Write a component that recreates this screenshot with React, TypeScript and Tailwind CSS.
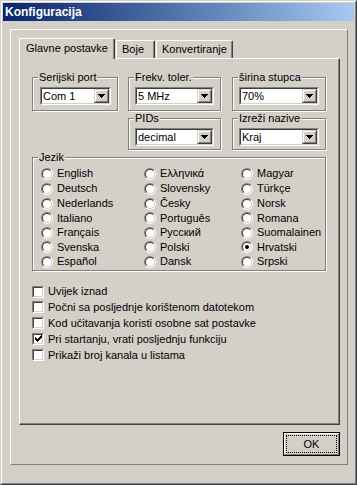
import React from 'react';

/* =======================
   DATA
======================= */
const LANGS: string[][] = [
  ['English', 'Ελληνικά', 'Magyar'],
  ['Deutsch', 'Slovensky', 'Türkçe'],
  ['Nederlands', 'Česky', 'Norsk'],
  ['Italiano', 'Português', 'Romana'],
  ['Français', 'Русский', 'Suomalainen'],
  ['Svenska', 'Polski', 'Hrvatski'],
  ['Español', 'Dansk', 'Srpski'],
];
const ROW_H = ['h-[15px]', 'h-[15px]', 'h-[15px]', 'h-[14px]', 'h-[15px]', 'h-[14px]', 'h-[15px]'];

const OPTIONS = [
  { label: 'Uvijek iznad', checked: false, h: 'h-[15px]' },
  { label: 'Počni sa posljednje korištenom datotekom', checked: false, h: 'h-[16px]' },
  { label: 'Kod učitavanja koristi osobne sat postavke', checked: false, h: 'h-[16px]' },
  { label: 'Pri startanju, vrati posljednju funkciju', checked: true, h: 'h-[16px]' },
  { label: 'Prikaži broj kanala u listama', checked: false, h: 'h-[16px]' },
];

/* =======================
   SMALL CONTROLS
======================= */
const Arrow = () => (
  <svg width="7" height="4" viewBox="0 0 7 4" shapeRendering="crispEdges">
    <path d="M0 0h7v1H0zM1 1h5v1H1zM2 2h3v1H2zM3 3h1v1H3z" fill="#000" />
  </svg>
);

const Combo: React.FC<{ value: string }> = ({ value }) => (
  <div className="h-[18px] border border-t-[#808080] border-l-[#808080] border-r-white border-b-white">
    <div className="flex h-full items-center bg-white border border-t-[#404040] border-l-[#404040] border-r-[#d4d0c8] border-b-[#d4d0c8]">
      <span className="flex-1 pl-[1px] leading-[14px]">{value}</span>
      <div className="h-full w-[15px] border border-t-[#d4d0c8] border-l-[#d4d0c8] border-r-[#404040] border-b-[#404040]">
        <div className="flex h-full items-center justify-center bg-[#d4d0c8] border border-t-white border-l-white border-r-[#808080] border-b-[#808080]">
          <Arrow />
        </div>
      </div>
    </div>
  </div>
);

const Group: React.FC<{ label: string; className?: string; children?: React.ReactNode }> = ({
  label,
  className,
  children,
}) => (
  <div
    className={`relative border border-[#808080] shadow-[1px_1px_0_#ffffff,inset_1px_1px_0_#ffffff] ${className ?? ''}`}
  >
    <span className="absolute left-[5px] top-[-7px] bg-[#d4d0c8] px-[1px] leading-[13px]">{label}</span>
    {children}
  </div>
);

const Radio: React.FC<{ checked?: boolean }> = ({ checked }) => (
  <div className="h-[12px] w-[12px] rounded-full border border-t-[#808080] border-l-[#808080] border-r-white border-b-white">
    <div className="flex h-full w-full items-center justify-center rounded-full bg-white border border-t-[#404040] border-l-[#404040] border-r-[#d4d0c8] border-b-[#d4d0c8]">
      {checked && <div className="h-[4px] w-[4px] rounded-full bg-black" />}
    </div>
  </div>
);

const Check: React.FC<{ checked?: boolean }> = ({ checked }) => (
  <div className="h-[12px] w-[12px] shrink-0 border border-t-[#808080] border-l-[#808080] border-r-white border-b-white">
    <div className="h-full w-full bg-white border border-t-[#404040] border-l-[#404040] border-r-[#d4d0c8] border-b-[#d4d0c8]">
      {checked && (
        <svg width="8" height="8" viewBox="0 0 8 8" shapeRendering="crispEdges">
          <path
            d="M1 2h1v3H1zM2 3h1v3H2zM3 4h1v3H3zM4 3h1v3H4zM5 2h1v3H5zM6 1h1v3H6zM7 0h1v3H7z"
            fill="#000"
          />
        </svg>
      )}
    </div>
  </div>
);

/* =======================
   MAIN DIALOG
======================= */
export default function App() {
  return (
    <div className="h-[485px] w-[357px] bg-[#d4d0c8] font-['Liberation_Sans',Arial,sans-serif] text-[11px] text-black border border-t-[#d4d0c8] border-l-[#d4d0c8] border-r-[#404040] border-b-[#404040]">
      <div className="h-full w-full p-[1px] border border-t-white border-l-white border-r-[#808080] border-b-[#808080]">
        {/* TITLE BAR */}
        <div className="flex h-[18px] items-center bg-gradient-to-r from-[#0a246a] to-[#a6caf0] pl-[2px]">
          <span className="text-[12px] font-bold text-white leading-[18px]">Konfiguracija</span>
        </div>

        {/* OUTER FRAME */}
        <div className="ml-[7px] mt-[8px] h-[436px] w-[338px] px-[8px] pt-[8px] border border-t-white border-l-white border-r-[#808080] border-b-[#808080]">
          {/* TABS */}
          <div className="flex h-[20px] items-end">
            <div className="relative z-10 -mb-[1px] flex h-[21px] w-[96px] items-start rounded-t-[2px] bg-[#d4d0c8] pl-[6px] pt-[3px] border-t border-l border-r border-t-white border-l-white border-r-[#404040] shadow-[inset_-1px_0_0_#808080]">
              <span className="leading-[13px]">Glavne postavke</span>
            </div>
            <div className="ml-[1px] flex h-[18px] w-[39px] items-start rounded-t-[2px] pl-[5px] pt-[2px] border-t border-l border-r border-t-white border-l-white border-r-[#404040] shadow-[inset_-1px_0_0_#808080]">
              <span className="leading-[13px]">Boje</span>
            </div>
            <div className="ml-[1px] flex h-[18px] w-[77px] items-start rounded-t-[2px] pl-[5px] pt-[2px] border-t border-l border-r border-t-white border-l-white border-r-[#404040] shadow-[inset_-1px_0_0_#808080]">
              <span className="leading-[13px]">Konvertiranje</span>
            </div>
          </div>

          {/* TAB PANEL */}
          <div className="h-[367px] w-[321px] pl-[12px] pt-[18px] border border-t-white border-l-white border-r-[#404040] border-b-[#404040] shadow-[inset_-1px_-1px_0_#808080]">
            <div className="flex">
              <Group label="Serijski port" className="h-[34px] w-[86px] pl-[7px] pr-[6px] pt-[9px]">
                <Combo value="Com 1" />
              </Group>
              <Group label="Frekv. toler." className="ml-[10px] h-[34px] w-[93px] px-[6px] pt-[9px]">
                <Combo value="5 MHz" />
              </Group>
              <Group label="širina stupca" className="ml-[11px] h-[34px] w-[94px] px-[6px] pt-[9px]">
                <Combo value="70%" />
              </Group>
            </div>

            <div className="mt-[7px] flex">
              <Group label="PIDs" className="ml-[96px] h-[32px] w-[93px] px-[6px] pt-[9px]">
                <Combo value="decimal" />
              </Group>
              <Group label="Izreži nazive" className="ml-[11px] h-[32px] w-[94px] px-[6px] pt-[9px]">
                <Combo value="Kraj" />
              </Group>
            </div>

            <Group label="Jezik" className="mt-[7px] h-[114px] w-[294px] pl-[8px] pt-[8px]">
              {LANGS.map((row, r) => (
                <div key={r} className={`grid grid-cols-[103px_97px_1fr] ${ROW_H[r]}`}>
                  {row.map((lang) => (
                    <div key={lang} className="flex items-center">
                      <Radio checked={lang === 'Hrvatski'} />
                      <span className="ml-[4px] leading-[13px]">{lang}</span>
                    </div>
                  ))}
                </div>
              ))}
            </Group>

            <div className="mt-[13px]">
              {OPTIONS.map((o) => (
                <div key={o.label} className={`flex items-center ${o.h}`}>
                  <Check checked={o.checked} />
                  <span className="ml-[4px] leading-[13px]">{o.label}</span>
                </div>
              ))}
            </div>
          </div>

          {/* OK BUTTON */}
          <div className="mt-[7px] flex w-[321px] justify-end">
            <button className="h-[24px] w-[57px] border border-black bg-[#d4d0c8]">
              <div className="h-full w-full p-[1px] border border-t-white border-l-white border-r-[#808080] border-b-[#808080]">
                <div className="flex h-full w-full items-center justify-center border border-dotted border-black">
                  <span className="leading-[13px]">OK</span>
                </div>
              </div>
            </button>
          </div>
        </div>
      </div>
    </div>
  );
}
